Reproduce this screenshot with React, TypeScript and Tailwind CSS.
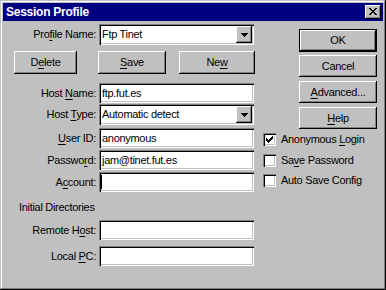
import React from "react";

const raised =
  "shadow-[inset_-1px_-1px_#000,inset_1px_1px_#fff,inset_-2px_-2px_#808080]";
const sunken =
  "shadow-[inset_1px_1px_#808080,inset_2px_2px_#000,inset_-1px_-1px_#fff,inset_-2px_-2px_#c0c0c0]";

const Key = ({ children }: { children: React.ReactNode }) => (
  <span className="underline underline-offset-[2px] decoration-[1px]">{children}</span>
);

const Label = ({ children }: { children: React.ReactNode }) => (
  <div className="w-[96px] shrink-0 pr-[3px] text-right whitespace-nowrap">{children}</div>
);

const Edit = ({ value, caret }: { value?: string; caret?: boolean }) => (
  <div className={`relative flex h-[20px] w-[155px] items-center bg-white pl-[3px] ${sunken}`}>
    {value}
    {caret && <div className="absolute left-[2px] top-[3px] h-[14px] w-[1px] bg-black" />}
  </div>
);

const Arrow = () => (
  <svg width="7" height="4" viewBox="0 0 7 4" shapeRendering="crispEdges">
    <rect x="0" y="0" width="7" height="1" fill="#000" />
    <rect x="1" y="1" width="5" height="1" fill="#000" />
    <rect x="2" y="2" width="3" height="1" fill="#000" />
    <rect x="3" y="3" width="1" height="1" fill="#000" />
  </svg>
);

const Combo = ({ value }: { value: string }) => (
  <div className={`flex h-[21px] w-[155px] items-center bg-white p-[2px] pl-[3px] ${sunken}`}>
    <span className="flex-1">{value}</span>
    <div className={`flex h-[17px] w-[16px] items-center justify-center bg-[#c0c0c0] ${raised}`}>
      <Arrow />
    </div>
  </div>
);

const Btn = ({ children, className = "" }: { children: React.ReactNode; className?: string }) => (
  <div className={`flex items-center justify-center bg-[#c0c0c0] ${raised} ${className}`}>{children}</div>
);

const Check = ({ checked, children, className = "" }: { checked?: boolean; children: React.ReactNode; className?: string }) => (
  <div className={`flex items-center ${className}`}>
    <div className={`relative h-[13px] w-[13px] bg-white ${sunken}`}>
      {checked && (
        <svg className="absolute left-[3px] top-[3px]" width="7" height="7" viewBox="0 0 7 7" shapeRendering="crispEdges">
          <path
            fill="#000"
            d="M6 0h1v1h-1zM5 1h2v1h-2zM0 2h1v1h-1zM4 2h3v1h-3zM0 3h2v1h-2zM3 3h3v1h-3zM0 4h5v1h-5zM1 5h3v1h-3zM2 6h1v1h-1z"
          />
        </svg>
      )}
    </div>
    <span className="ml-[5px] whitespace-nowrap">{children}</span>
  </div>
);

const Row = ({ label, children, className = "" }: { label: React.ReactNode; children: React.ReactNode; className?: string }) => (
  <div className={`flex items-center ${className}`}>
    <Label>{label}</Label>
    {children}
  </div>
);

export default function App() {
  return (
    <div
      className="h-[290px] w-[386px] bg-[#c0c0c0] p-[3px] text-[11px] leading-[13px] tracking-[-0.3px] text-black shadow-[inset_-1px_-1px_#000,inset_1px_1px_#c0c0c0,inset_-2px_-2px_#808080,inset_2px_2px_#fff]"
      style={{ fontFamily: '"Liberation Sans", Arial, sans-serif' }}
    >
      {/* title bar */}
      <div className="flex h-[18px] items-center justify-between bg-[#000080] pl-[3px] pr-[2px]">
        <span className="text-[12px] font-bold tracking-[-0.25px] text-white">Session Profile</span>
        <div className={`relative h-[14px] w-[16px] bg-[#c0c0c0] ${raised}`}>
          <svg className="absolute left-[4px] top-[3px]" width="8" height="7" viewBox="0 0 8 7" shapeRendering="crispEdges">
            <path
              fill="#000"
              d="M0 0h2v1h-2zM6 0h2v1h-2zM1 1h2v1h-2zM5 1h2v1h-2zM2 2h4v1h-4zM3 3h2v1h-2zM2 4h4v1h-4zM1 5h2v1h-2zM5 5h2v1h-2zM0 6h2v1h-2zM6 6h2v1h-2z"
            />
          </svg>
        </div>
      </div>

      <div className="flex">
        {/* left column */}
        <div className="w-[252px]">
          <Row className="mt-[3px]" label={<>Pro<Key>f</Key>ile Name:</>}>
            <Combo value="Ftp Tinet" />
          </Row>
          <div className="mt-[6px] flex h-[23px]">
            <Btn className="ml-[11px] w-[63px]">D<Key>e</Key>lete</Btn>
            <Btn className="ml-[21px] w-[68px]"><Key>S</Key>ave</Btn>
            <Btn className="ml-[13px] w-[76px]">Ne<Key>w</Key></Btn>
          </div>
          <Row className="mt-[9px]" label={<>Host <Key>N</Key>ame:</>}>
            <Edit value="ftp.fut.es" />
          </Row>
          <Row className="mt-[1px]" label={<>Host <Key>T</Key>ype:</>}>
            <Combo value="Automatic detect" />
          </Row>
          <Row className="mt-[3px]" label={<><Key>U</Key>ser ID:</>}>
            <Edit value="anonymous" />
          </Row>
          <Row className="mt-[2px]" label={<>Passwo<Key>r</Key>d:</>}>
            <Edit value="jam@tinet.fut.es" />
          </Row>
          <Row className="mt-[2px]" label={<>A<Key>c</Key>count:</>}>
            <Edit caret />
          </Row>
          <div className="mt-[9px] h-[13px] pl-[16px]">Initial Directories</div>
          <Row className="mt-[6px]" label={<>Remote H<Key>o</Key>st:</>}>
            <Edit />
          </Row>
          <Row className="mt-[6px]" label={<>Local <Key>P</Key>C:</>}>
            <Edit />
          </Row>
        </div>

        {/* right column */}
        <div className="flex-1">
          <div className="ml-[44px] mt-[8px] w-[78px]">
            <div className="border border-black">
              <Btn className="h-[21px]">OK</Btn>
            </div>
            <Btn className="mt-[3px] h-[22px]">Cancel</Btn>
            <Btn className="mt-[4px] h-[22px]"><Key>A</Key>dvanced...</Btn>
            <Btn className="mt-[4px] h-[22px]"><Key>H</Key>elp</Btn>
          </div>
          <div className="ml-[8px]">
            <Check checked className="mt-[4px]">Anonymous <Key>L</Key>ogin</Check>
            <Check className="mt-[8px]">Sa<Key>v</Key>e Password</Check>
            <Check className="mt-[7px]">Auto Save Config</Check>
          </div>
        </div>
      </div>
    </div>
  );
}
